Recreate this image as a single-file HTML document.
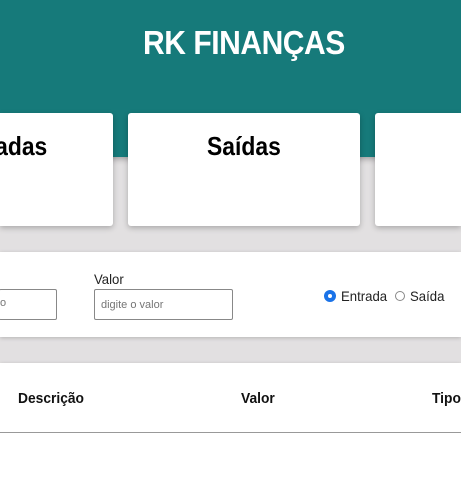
<!DOCTYPE html>
<html><head><style>
html,body{margin:0;width:461px;height:484px;overflow:hidden}
body{background:#e2e0e1;font-family:"Liberation Sans",Arial,sans-serif;position:relative}
.hdr{position:absolute;left:0;top:0;width:461px;height:157px;background:#167a7a;box-shadow:0 2px 6px rgba(0,0,0,.3)}
.c{display:inline-block}
.title{position:absolute;left:0;width:488px;top:24px;text-align:center;color:#fff;font-weight:bold;font-size:33px;letter-spacing:-0.5px}
.title .c{transform:scaleX(0.91)}
.card{position:absolute;top:113px;height:113px;background:#fff;border-radius:3px;box-shadow:0 2px 6px rgba(0,0,0,.25);font-weight:bold;font-size:26px;color:#000;overflow:hidden}
.ct{position:absolute;top:18px;white-space:nowrap}
.ct .c{transform:scaleX(0.88)}
.panel{position:absolute;left:0;width:461px;background:#fff;box-shadow:0 1px 4px rgba(0,0,0,.2)}
input.t{position:absolute;height:31px;border:1px solid #888;border-radius:2px;box-sizing:border-box;font-size:11px;color:#777;padding-left:6px;font-family:"Liberation Sans",sans-serif}
.lbl{position:absolute;font-size:14px;color:#222;transform-origin:left;transform:scaleX(0.94)}
.th{position:absolute;top:390px;font-weight:bold;font-size:15px;color:#111;transform-origin:left;transform:scaleX(0.92)}
.rad{position:absolute;width:10px;height:10px;border-radius:50%;box-sizing:border-box}
</style></head><body>
<div class="hdr"><div class="title"><span class="c">RK FINANÇAS</span></div></div>
<div class="card" style="left:0;width:113px;border-radius:0 3px 3px 0"><div class="ct" style="left:-200px;width:247px;text-align:right"><span class="c" style="transform-origin:right">Entradas</span></div></div>
<div class="card" style="left:128px;width:232px"><div class="ct" style="left:0;right:0;text-align:center"><span class="c">Saídas</span></div></div>
<div class="card" style="left:375px;width:86px;border-radius:3px 0 0 3px"></div>
<div class="panel" style="top:252px;height:85px"></div>
<div class="lbl" style="left:94px;top:271px">Valor</div>
<input class="t" style="left:-1px;top:289px;width:58px;border-left:none" value="">
<div style="position:absolute;left:0;top:297px;font-size:11px;color:#777">o</div>
<input class="t" style="left:94px;top:289px;width:139px" placeholder="digite o valor">
<div class="rad" style="left:325px;top:291px;border:3px solid #1a73e8;background:#fff;box-shadow:0 0 0 1px #1a73e8"></div>
<div class="lbl" style="left:341px;top:288px">Entrada</div>
<div class="rad" style="left:395px;top:291px;border:1px solid #888;background:#fff"></div>
<div class="lbl" style="left:410px;top:288px">Saída</div>
<div class="panel" style="top:363px;height:121px"></div>
<div class="th" style="left:18px">Descrição</div>
<div class="th" style="left:241px">Valor</div>
<div class="th" style="left:432px">Tipo</div>
<div style="position:absolute;left:0;top:432px;width:461px;height:1px;background:#999"></div>
</body></html>
